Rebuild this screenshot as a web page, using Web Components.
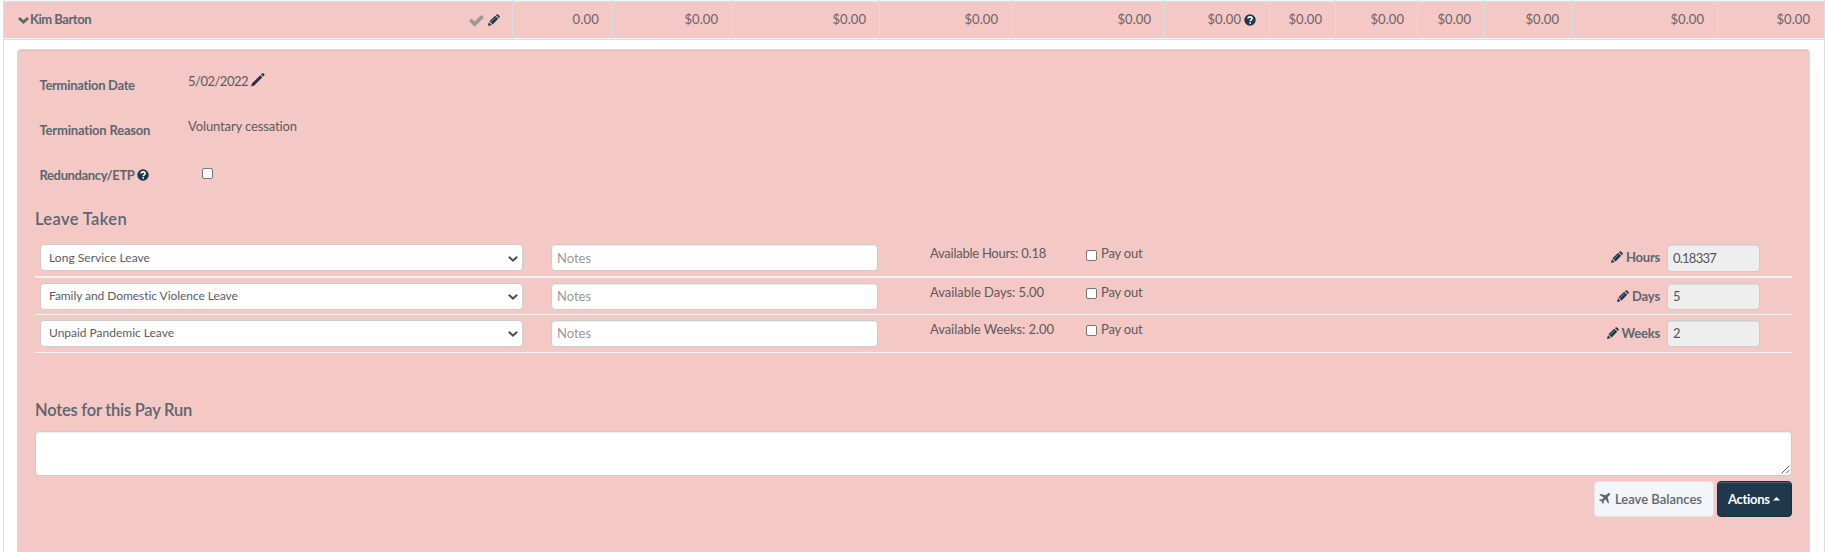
<!DOCTYPE html>
<html lang="en">
<head>
<meta charset="utf-8">
<title>Pay Run</title>
<style>
  body {
    margin: 0;
    background: #fff;
    font-family: Lato, "Open Sans", "Liberation Sans", sans-serif;
    font-size: 13px;
    line-height: 20px;
    color: #5c6670;
    overflow: hidden;
    height: 552px;
  }
</style>
</head>
<body>
<pay-run-employee></pay-run-employee>

<script>
const ICONS = {
  chevron: ['0 0 11 7', '<path d="M0 2 2 0 5.5 3.2 9 0 11 2 5.5 7z"/>'],
  check: ['0 0 15 12', '<path d="M0 6 2.5 3.4 5.6 6.4 12.3 0 15 2.6 5.6 11.7z"/>'],
  pencil: ['0 0 12 12', '<path d="M0 12 .9 8.2 3.8 11.1zM1.5 7.3 7.2 1.8 10.2 4.7 4.6 10.4zM7.9 1.1 8.7.4Q9.3-.1 9.9.4L11.6 2.1Q12.2 2.8 11.6 3.4L10.9 4.1z"/><path d="M2.9 8 7.6 3.4" stroke="#a9a3ab" stroke-width=".7" fill="none"/>'],
  pen: ['0 0 14 14', '<path d="M0 13.6 1.1 10.3 9.3 2.2 11.4 4.3 3.3 12.5zM10 1.5 11.1.4Q11.8-.2 12.5.4L13.2 1.1Q13.9 1.8 13.2 2.5L12.1 3.6z"/>'],
  help: ['0 0 12 12', '<circle cx="6" cy="6" r="5.7"/><path d="M4 4.6C4 2.2 8.2 2.3 8.1 4.5 8.1 5.9 6.2 5.8 6.2 7.3M6.2 8.3V9.8" stroke="#fff" stroke-width="1.6" fill="none"/>'],
  plane: ['0 0 11 11', '<path d="M10.8.2C10.2-.3 9.2 0 8.5.7L6.9 2.3 1.3 1 .4 1.9 4.8 4.4 2.9 6.4.9 6.2 0 7.1 2.6 8.4 3.9 11 4.8 10.1 4.6 8.1 6.6 6.2 9.1 10.6 10 9.7 8.7 4.1 10.3 2.5C11 1.8 11.3.8 10.8.2z"/>'],
  down: ['0 0 10 6', '<path d="M.8.8 5 4.6 9.2.8" fill="none" stroke="#505050" stroke-width="2"/>'],
  caret: ['0 0 7 4', '<path d="M0 3.5 3.5 0 7 3.5z"/>'],
  grip: ['0 0 9 9', '<path d="M.5 8.5 8.5.5M5 8.5 8.5 5" stroke="#555" stroke-width=".9"/>']
};

class SvgIcon extends HTMLElement {
  connectedCallback() {
    const [box, body] = ICONS[this.getAttribute('name')];
    const [, , w, h] = box.split(' ');
    this.attachShadow({ mode: 'open' }).innerHTML = `
      <style>
        :host { display: inline-block; flex: none; width: ${w}px; height: ${h}px; line-height: 0; }
        svg { display: block; fill: currentColor; overflow: visible; }
      </style>
      <svg width="${w}" height="${h}" viewBox="${box}">${body}</svg>
    `;
  }
}

// Text that is tracked in or out until it takes the given width
class FitText extends HTMLElement {
  connectedCallback() {
    this.attachShadow({ mode: 'open' }).innerHTML = `
      <style>
        :host { display: inline-block; white-space: nowrap; }
      </style>
      <slot></slot>
    `;
    const target = parseFloat(this.getAttribute('w'));
    const count = this.textContent.length;
    if (target && count) {
      const natural = this.getBoundingClientRect().width;
      this.style.letterSpacing = ((target - natural) / count).toFixed(3) + 'px';
    }
  }
}

class MoneyCell extends HTMLElement {
  connectedCallback() {
    this.attachShadow({ mode: 'open' }).innerHTML = `
      <style>
        :host {
          display: flex;
          box-sizing: border-box;
          width: ${this.getAttribute('size')}px;
          height: 39px;
          padding: 9px 13px 0 10px;
          justify-content: flex-end;
          border-right: 1px solid #dcdfe2;
        }
        :host(:last-of-type) { padding-right: 14px; border-right: 0; }
        ::slotted(svg-icon) { margin: 5px 0 0 3px; color: #1c364b; }
      </style>
      <slot></slot>
    `;
  }
}

class CheckBox extends HTMLElement {
  connectedCallback() {
    this.attachShadow({ mode: 'open' }).innerHTML = `
      <style>
        :host { display: inline-block; flex: none; }
        input {
          appearance: none;
          display: block;
          box-sizing: border-box;
          width: 11px;
          height: 11px;
          margin: 0;
          background: #fff;
          border: 1px solid #767676;
          border-radius: 2px;
        }
      </style>
      <input type="checkbox">
    `;
  }
}

class FieldBox extends HTMLElement {
  connectedCallback() {
    this.attachShadow({ mode: 'open' }).innerHTML = `
      <style>
        :host {
          display: flex;
          flex: none;
          box-sizing: border-box;
          height: 27px;
          padding: 2px 5px 0;
          background: #fff;
          border: 1px solid #ccc;
          border-radius: 4px;
          box-shadow: inset 0 1px 1px rgba(0, 0, 0, .075);
          color: #999;
        }
        :host([kind="select"]) {
          justify-content: space-between;
          padding: 2px 4px 0 8px;
          box-shadow: none;
          font-size: 12px;
          color: #5c5c5c;
        }
        :host([kind="readonly"]) { background: #eee; color: #555; }
        svg-icon { margin-top: 8px; }
      </style>
      <slot></slot>
      ${this.getAttribute('kind') === 'select' ? '<svg-icon name="down"></svg-icon>' : ''}
    `;
  }
}

class FormRow extends HTMLElement {
  connectedCallback() {
    this.attachShadow({ mode: 'open' }).innerHTML = `
      <style>
        :host { display: grid; grid-template-columns: 148.5px 1fr; height: 45px; }
        .label { display: flex; padding-top: 4px; font-weight: 700; }
        .value { display: flex; color: #5d5a60; }
        ::slotted(svg-icon) { color: #1c364b; }
      </style>
      <div class="label"><slot name="label"></slot></div>
      <div class="value"><slot></slot></div>
    `;
  }
}

class LeaveRow extends HTMLElement {
  connectedCallback() {
    const get = name => this.getAttribute(name);
    this.attachShadow({ mode: 'open' }).innerHTML = `
      <style>
        :host {
          display: flex;
          box-sizing: border-box;
          height: 38px;
          padding: 5px 32px 0 5px;
          border-bottom: 1px solid #f2f4f7;
        }
        :host([first]) { height: 42px; padding-top: 8px; border-bottom-width: 2px; }
        :host([second]) { height: 37px; }
        :host([first]) field-box { padding-top: 3px; }
        .type { width: 483px; margin-right: 28px; }
        .notes { width: 327px; margin-right: 52px; }
        .available { width: 156px; }
        .available, .payout { margin-top: -1px; color: #5d5a60; }
        check-box { margin: 5px 4px 0 0; }
        :host([first]) check-box { margin-top: 6px; }
        .unit { display: flex; margin: 3px 7px 0 auto; font-weight: 700; }
        .unit svg-icon { margin: 4px 3px 0 0; color: #1c364b; }
        .amount { width: 93px; }
        :host([first]) .amount { height: 28px; }
      </style>
      <field-box class="type" kind="select"><fit-text w="${get('type-w')}">${get('type')}</fit-text></field-box>
      <field-box class="notes"><fit-text w="34">Notes</fit-text></field-box>
      <div class="available"><fit-text w="${get('available-w')}">${get('available')}</fit-text></div>
      <check-box></check-box>
      <div class="payout"><fit-text w="41.5">Pay out</fit-text></div>
      <div class="unit"><svg-icon name="pencil"></svg-icon><fit-text w="${get('unit-w')}">${get('unit')}</fit-text></div>
      <field-box class="amount" kind="readonly"><fit-text w="${get('amount-w')}">${get('amount')}</fit-text></field-box>
    `;
  }
}

class PayButton extends HTMLElement {
  connectedCallback() {
    this.attachShadow({ mode: 'open' }).innerHTML = `
      <style>
        :host {
          display: flex;
          box-sizing: border-box;
          width: 120px;
          height: 36px;
          padding: 7px 4px 5px;
          background: #f4f5f8;
          border: 1px solid #dfe3ea;
          border-radius: 4px;
          font-weight: 600;
        }
        :host([primary]) {
          width: 75px;
          padding-left: 10px;
          background: #1f384c;
          border-color: #1a3042;
          box-shadow: inset 0 1px 0 rgba(255, 255, 255, .2);
          color: #fff;
          font-weight: 700;
        }
        ::slotted([name="plane"]) { margin: 4px 5px 0 0; }
        ::slotted([name="caret"]) { margin: 8px 0 0 3px; }
      </style>
      <slot></slot>
    `;
  }
}

class PayRunEmployee extends HTMLElement {
  connectedCallback() {
    const cells = [100, 119, 148, 132, 153, 105, 66, 82, 67, 88, 145, 106];
    this.attachShadow({ mode: 'open' }).innerHTML = `
      <style>
        :host {
          display: block;
          box-sizing: border-box;
          width: 1822px;
          height: 552px;
          margin-left: 3px;
          border: solid #dcdfe2;
          border-width: 0 1px;
        }
        .summary {
          display: flex;
          height: 39px;
          background: linear-gradient(#f4f6f9 1px, #dcdfe2 1px 2px, #f4c8c4 2px 38px, #f4f6f9 38px);
          border-bottom: 1px solid #dcdfe2;
          color: #68646c;
        }
        .name {
          display: flex;
          box-sizing: border-box;
          width: 509px;
          padding: 9px 12px 0 14px;
          border-right: 1px solid #dcdfe2;
          font-weight: 700;
          color: #5c6670;
        }
        .name .open { margin: 8px 1px 0 0; }
        .name .done { margin: 6px 4px 0 auto; color: #999; }
        .name .edit { margin-top: 5px; color: #1c364b; }
        .panel {
          box-sizing: border-box;
          height: 520px;
          margin: 9px 14px 0 13px;
          padding: 21px 17px 0;
          background: #f4c8c4;
          border: 1px solid #e3d5d5;
          border-radius: 4px;
          box-shadow: inset 0 1px 1px rgba(0, 0, 0, .06);
        }
        .form { padding-left: 4.5px; }
        h4 { margin: 3px 0 7px; font-size: 16.5px; line-height: 20px; font-weight: 600; }
        .notes-title { margin: 47px 0 11px; }
        .textarea {
          display: flex;
          box-sizing: border-box;
          height: 45px;
          padding: 0 1px 1px;
          justify-content: flex-end;
          align-items: flex-end;
          background: #fff;
          border: 1px solid #ccc;
          border-radius: 4px;
          box-shadow: inset 0 1px 1px rgba(0, 0, 0, .075);
        }
        .buttons { display: flex; justify-content: flex-end; gap: 3px; margin-top: 5px; }
      </style>
      <div class="summary">
        <div class="name">
          <svg-icon class="open" name="chevron"></svg-icon>
          <fit-text w="61">Kim Barton</fit-text>
          <svg-icon class="done" name="check"></svg-icon>
          <svg-icon class="edit" name="pencil"></svg-icon>
        </div>
        ${cells.map((size, i) => `<money-cell size="${size}"><fit-text w="${i ? 33.5 : 26.5}">${i ? '$0.00' : '0.00'}</fit-text>${i === 5 ? '<svg-icon name="help"></svg-icon>' : ''}</money-cell>`).join('')}
      </div>
      <div class="panel">
        <div class="form">
          <form-row>
            <fit-text slot="label" w="95.5">Termination Date</fit-text>
            <fit-text w="60">5/02/2022</fit-text>
            <svg-icon name="pen" style="margin: 2px 0 0 3px"></svg-icon>
          </form-row>
          <form-row>
            <fit-text slot="label" w="111">Termination Reason</fit-text>
            <fit-text w="109">Voluntary cessation</fit-text>
          </form-row>
          <form-row>
            <fit-text slot="label" w="95">Redundancy/ETP</fit-text>
            <svg-icon slot="label" name="help" style="margin: 4px 0 0 3px"></svg-icon>
            <check-box style="margin: 7px 0 0 14px"></check-box>
          </form-row>
        </div>
        <h4><fit-text w="92">Leave Taken</fit-text></h4>
        <leave-row first type="Long Service Leave" type-w="101" available="Available Hours: 0.18" available-w="116" unit="Hours" unit-w="34" amount="0.18337" amount-w="43"></leave-row>
        <leave-row second type="Family and Domestic Violence Leave" type-w="189" available="Available Days: 5.00" available-w="114" unit="Days" unit-w="28" amount="5" amount-w="8"></leave-row>
        <leave-row type="Unpaid Pandemic Leave" type-w="125" available="Available Weeks: 2.00" available-w="124" unit="Weeks" unit-w="38.5" amount="2" amount-w="8"></leave-row>
        <h4 class="notes-title"><fit-text w="157">Notes for this Pay Run</fit-text></h4>
        <div class="textarea"><svg-icon name="grip"></svg-icon></div>
        <div class="buttons">
          <pay-button><svg-icon name="plane"></svg-icon><fit-text w="87">Leave Balances</fit-text></pay-button>
          <pay-button primary><fit-text w="42">Actions</fit-text><svg-icon name="caret"></svg-icon></pay-button>
        </div>
      </div>
    `;
  }
}

// The outer elements come last, so the text is measured once its styles are in place
customElements.define('svg-icon', SvgIcon);
customElements.define('check-box', CheckBox);
customElements.define('money-cell', MoneyCell);
customElements.define('field-box', FieldBox);
customElements.define('form-row', FormRow);
customElements.define('leave-row', LeaveRow);
customElements.define('pay-button', PayButton);
customElements.define('pay-run-employee', PayRunEmployee);
customElements.define('fit-text', FitText);
</script>
</body>
</html>
